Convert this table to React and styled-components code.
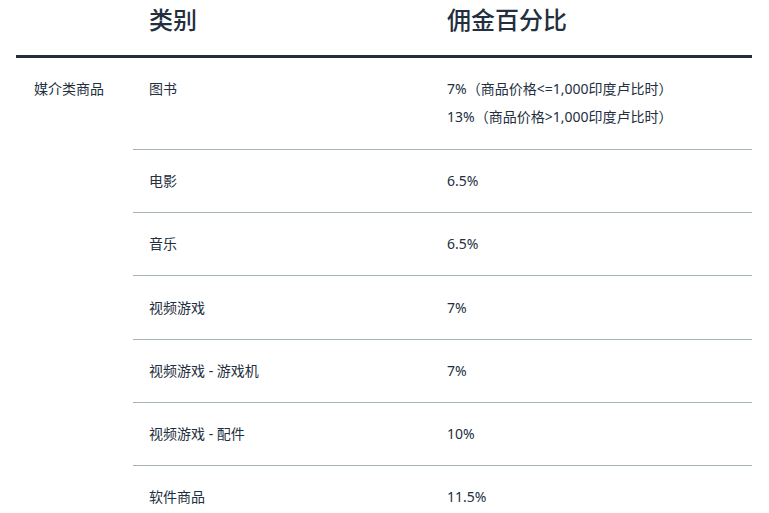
import React from 'react';
import styled, { createGlobalStyle } from 'styled-components';

const GlobalStyle = createGlobalStyle`
  body {
    margin: 0;
    background: #fff;
    font-family: "Noto Sans", "Noto Sans CJK SC", sans-serif;
    color: #232f3e;
  }
`;

const rows = [
  { name: '图书', rates: ['7%（商品价格<=1,000印度卢比时）', '13%（商品价格>1,000印度卢比时）'] },
  { name: '电影', rates: ['6.5%'] },
  { name: '音乐', rates: ['6.5%'] },
  { name: '视频游戏', rates: ['7%'] },
  { name: '视频游戏 - 游戏机', rates: ['7%'] },
  { name: '视频游戏 - 配件', rates: ['10%'] },
  { name: '软件商品', rates: ['11.5%'] },
];

export default function App() {
  return (
    <>
      <GlobalStyle />
      <Wrapper>
        <Table>
          <colgroup>
            <col style={{ width: 117 }} />
            <col style={{ width: 298 }} />
            <col />
          </colgroup>
          <thead>
            <tr>
              <HeadCell />
              <HeadCell>类别</HeadCell>
              <HeadCell>佣金百分比</HeadCell>
            </tr>
          </thead>
          <tbody>
            {rows.map((row, i) => (
              <tr key={row.name}>
                {i === 0 && <GroupCell rowSpan={rows.length}>媒介类商品</GroupCell>}
                <Cell $first={i === 0} $last={i === rows.length - 1}>{row.name}</Cell>
                <Cell $first={i === 0} $last={i === rows.length - 1}>
                  {row.rates.map((r) => (
                    <Rate key={r}>{r}</Rate>
                  ))}
                </Cell>
              </tr>
            ))}
          </tbody>
        </Table>
      </Wrapper>
    </>
  );
}

const Wrapper = styled.div`
  padding: 0 17px 0 16px;
`;

const Table = styled.table`
  width: 100%;
  border-collapse: collapse;
  table-layout: fixed;
`;

const HeadCell = styled.th`
  text-align: left;
  font-size: 24px;
  font-weight: 500;
  line-height: 32px;
  padding: 4px 16px 19px;
  border-bottom: 3px solid #232f3e;
`;

const GroupCell = styled.td`
  vertical-align: top;
  font-size: 14px;
  line-height: 20px;
  padding: 21px 8px 21px 18px;
  white-space: nowrap;
`;

const Cell = styled.td`
  vertical-align: top;
  font-size: 14px;
  line-height: 20px;
  padding: ${(p) => (p.$first ? '21px 16px 22px' : '21.2px 16px 21px')};
  border-bottom: ${(p) => (p.$last ? 'none' : '1px solid #a7b4b4')};
`;

const Rate = styled.p`
  margin: 0;
  & + & {
    margin-top: 8px;
  }
`;
